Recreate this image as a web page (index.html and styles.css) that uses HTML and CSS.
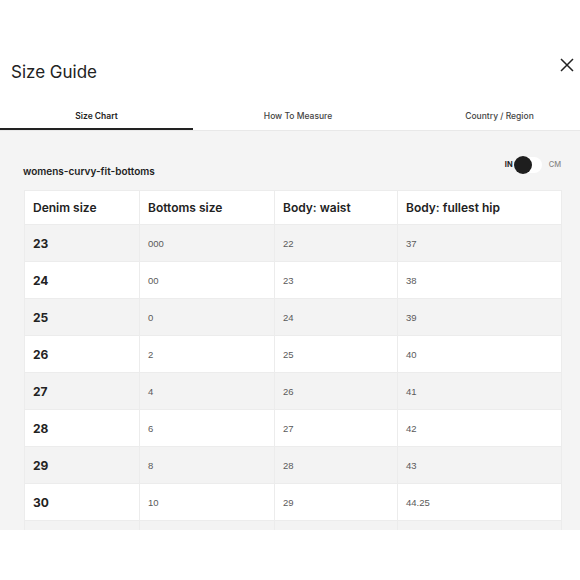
FILE: index.html
```html
<!DOCTYPE html>
<html>
<head>
<meta charset="utf-8">
<link rel="stylesheet" href="styles.css">
</head>
<body>
<div class="modal">
  <div class="head">
    <h1 class="title">Size Guide</h1>
    <svg class="close" width="14" height="14" viewBox="0 0 14 14"><path d="M1 1L13 13M13 1L1 13" stroke="#222" stroke-width="1.5" fill="none"/></svg>
  </div>
  <div class="tabs">
    <div class="tab tab-a active">Size Chart</div>
    <div class="tab tab-b">How To Measure</div>
    <div class="tab tab-c">Country / Region</div>
  </div>
  <div class="panel">
    <div class="panel-top">
      <div class="label">womens-curvy-fit-bottoms</div>
      <div class="units">
        <span class="in">IN</span>
        <span class="track"><span class="knob"></span></span>
        <span class="cm">CM</span>
      </div>
    </div>
    <table class="chart">
      <thead>
        <tr><th class="c1">Denim size</th><th class="c2">Bottoms size</th><th class="c3">Body: waist</th><th class="c4">Body: fullest hip</th></tr>
      </thead>
      <tbody>
        <tr class="alt"><td>23</td><td>000</td><td>22</td><td>37</td></tr>
        <tr><td>24</td><td>00</td><td>23</td><td>38</td></tr>
        <tr class="alt"><td>25</td><td>0</td><td>24</td><td>39</td></tr>
        <tr><td>26</td><td>2</td><td>25</td><td>40</td></tr>
        <tr class="alt"><td>27</td><td>4</td><td>26</td><td>41</td></tr>
        <tr><td>28</td><td>6</td><td>27</td><td>42</td></tr>
        <tr class="alt"><td>29</td><td>8</td><td>28</td><td>43</td></tr>
        <tr><td>30</td><td>10</td><td>29</td><td>44.25</td></tr>
        <tr class="alt"><td></td><td></td><td></td><td></td></tr>
      </tbody>
    </table>
  </div>
</div>
</body>
</html>
```

FILE: styles.css
```css
html, body {
  margin: 0;
  padding: 0;
  background: #fff;
  font-family: Inter, "Liberation Sans", Arial, sans-serif;
  color: #222;
}
.modal {
  width: 580px;
  height: 580px;
  overflow: hidden;
}
.head {
  display: flex;
  justify-content: space-between;
  align-items: flex-start;
  padding: 61px 6px 0 11px;
  height: 39px;
}
.title {
  margin: 0;
  font-size: 17px;
  font-weight: 400;
  line-height: 22px;
  color: #222;
}
.close {
  margin-top: -3px;
}
.tabs {
  display: flex;
  height: 30px;
  border-bottom: 1px solid #e8e8e8;
}
.tab {
  height: 30px;
  font-size: 8.5px;
  font-weight: 500;
  color: #444;
  text-align: center;
  line-height: 32px;
  box-sizing: border-box;
}
.tab-a {
  width: 193px;
  font-weight: 600;
  color: #222;
}
.tab-b {
  width: 210px;
}
.tab-c {
  width: 177px;
  padding-left: 16px;
}
.active {
  border-bottom: 2px solid #222;
}
.panel {
  background: #f4f4f4;
  height: 399px;
  overflow: hidden;
  padding: 0 18px 0 24px;
}
.panel-top {
  display: flex;
  justify-content: space-between;
  align-items: center;
  height: 59px;
}
.label {
  font-size: 10px;
  font-weight: 600;
  color: #222;
  margin-left: -1px;
  margin-top: 20px;
}
.units {
  display: flex;
  align-items: center;
  margin-top: 8px;
  margin-right: 1px;
  font-size: 7.5px;
}
.in {
  font-weight: 700;
  color: #222;
}
.track {
  display: block;
  width: 28px;
  height: 16px;
  border-radius: 8px;
  background: #fff;
  margin: 0 7px 0 1px;
  position: relative;
}
.knob {
  position: absolute;
  left: 0;
  top: -1px;
  width: 18px;
  height: 18px;
  border-radius: 50%;
  background: #1e1e1e;
}
.cm {
  color: #888;
  font-weight: 500;
}
.chart {
  width: 538px;
  border-collapse: collapse;
  table-layout: fixed;
}
.chart th, .chart td {
  border: 1px solid #ececec;
  text-align: left;
  padding: 0 0 0 8px;
}
.chart th {
  background: #fff;
  height: 33px;
  font-size: 12px;
  font-weight: 600;
  color: #222;
}
.c1 { width: 106px; }
.c2 { width: 126px; }
.c3 { width: 114px; }
.chart td {
  height: 36px;
  font-size: 9.5px;
  color: #5a5a5a;
  font-family: "Liberation Sans", Arial, sans-serif;
}
.chart td:first-child {
  font-family: Inter, "Liberation Sans", Arial, sans-serif;
  font-size: 12px;
  font-weight: 700;
  color: #222;
}
.chart tr td { background: #fff; }
.chart tr.alt td { background: #f3f3f3; }
```
